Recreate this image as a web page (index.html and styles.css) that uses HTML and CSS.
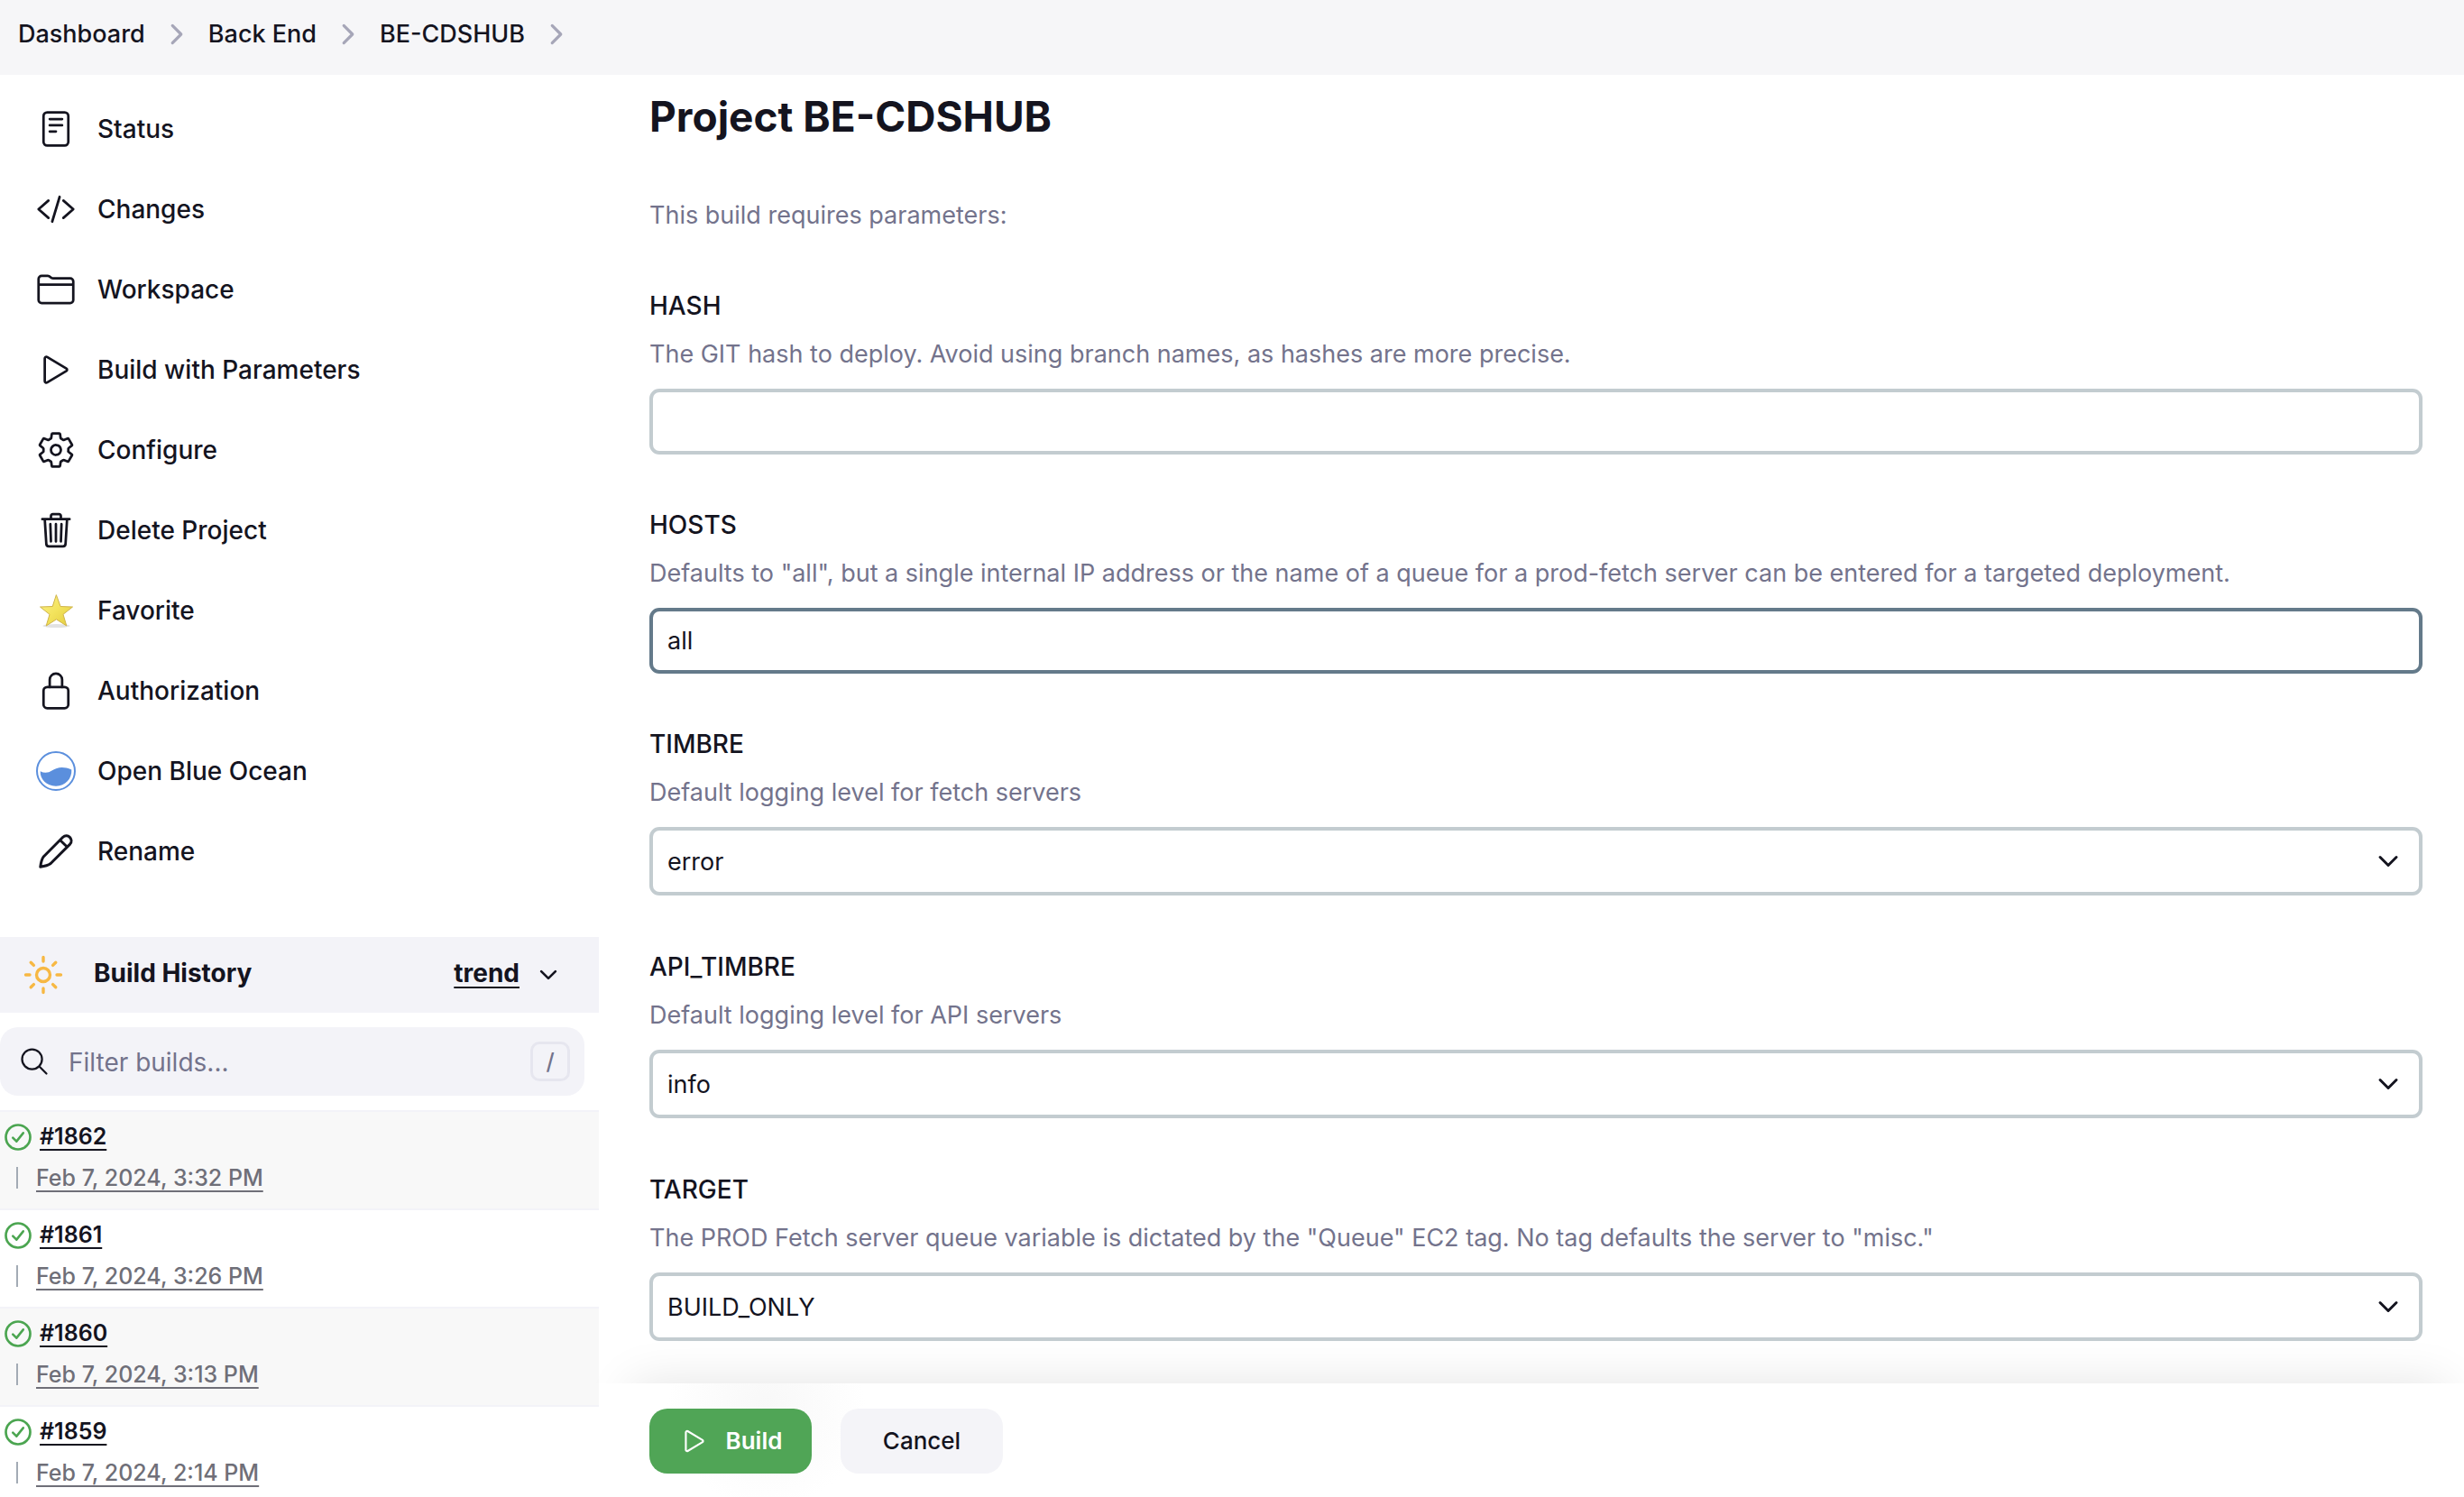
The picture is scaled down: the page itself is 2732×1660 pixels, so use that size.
FILE: index.html
```html
<!DOCTYPE html>
<html lang="en">
<head>
<meta charset="utf-8">
<title>BE-CDSHUB [Jenkins]</title>
<link rel="stylesheet" href="styles.css">
</head>
<body>
<svg class="sprite" aria-hidden="true">
  <symbol id="i-chevron-right" viewBox="0 0 512 512"><path d="M184 112l144 144-144 144" stroke-width="48"/></symbol>
  <symbol id="i-chevron-down" viewBox="0 0 512 512"><path d="M112 184l144 144 144-144" stroke-width="48"/></symbol>
  <symbol id="i-play" viewBox="0 0 512 512"><path d="M112 111v290c0 17.44 17 28.52 31 20.16l247.9-148.37c12.12-7.25 12.12-26.33 0-33.58L143 90.84c-14-8.36-31 2.72-31 20.16z" stroke-width="32"/></symbol>
  <symbol id="i-ok" viewBox="0 0 512 512"><path d="M448 256c0-106-86-192-192-192S64 150 64 256s86 192 192 192 192-86 192-192z" stroke-width="38"/><path d="M338 190L232 322l-58-58" stroke-width="36"/></symbol>
</svg>

<header>
  <nav class="breadcrumbs" aria-label="Breadcrumb">
    <a href="#">Dashboard</a>
    <svg class="icon crumb-sep"><use href="#i-chevron-right"/></svg>
    <a href="#">Back End</a>
    <svg class="icon crumb-sep"><use href="#i-chevron-right"/></svg>
    <a href="#">BE-CDSHUB</a>
    <svg class="icon crumb-sep"><use href="#i-chevron-right"/></svg>
  </nav>
</header>

<div class="page">
  <aside class="side">
    <nav class="tasks" aria-label="Project">
      <a class="task" href="#"><svg class="icon" viewBox="0 0 512 512"><rect x="96" y="42" width="320" height="428" rx="48" stroke-width="32"/><path d="M176 128h160M176 208h160M176 288h80" stroke-width="32"/></svg>Status</a>
      <a class="task" href="#"><svg class="icon" viewBox="0 0 512 512"><path d="M160 368L32 256l128-112M352 368l128-112-128-112M304 96l-96 320" stroke-width="32"/></svg>Changes</a>
      <a class="task" href="#"><svg class="icon" viewBox="0 0 512 512"><path d="M440 432H72a40 40 0 01-40-40V120a40 40 0 0140-40h75.89a40 40 0 0122.19 6.72l27.84 18.56a40 40 0 0022.19 6.72H440a40 40 0 0140 40v240a40 40 0 01-40 40zM32 192h448" stroke-width="32"/></svg>Workspace</a>
      <a class="task" href="#"><svg class="icon"><use href="#i-play"/></svg>Build with Parameters</a>
      <a class="task" href="#"><svg class="icon" viewBox="0 0 512 512"><path d="M262.29 192.31a64 64 0 1057.4 57.4 64.13 64.13 0 00-57.4-57.4zM416.39 256a154.34 154.34 0 01-1.53 20.79l45.21 35.46a10.81 10.81 0 012.45 13.75l-42.77 74a10.81 10.81 0 01-13.14 4.59l-44.9-18.08a16.11 16.11 0 00-15.17 1.75A164.48 164.48 0 01325 400.8a15.94 15.94 0 00-8.82 12.14l-6.73 47.89a11.08 11.08 0 01-10.68 9.17h-85.54a11.11 11.11 0 01-10.69-8.87l-6.72-47.82a16.07 16.07 0 00-9-12.22 155.3 155.3 0 01-21.46-12.57 16 16 0 00-15.11-1.71l-44.89 18.07a10.81 10.81 0 01-13.14-4.58l-42.77-74a10.8 10.8 0 012.45-13.75l38.21-30a16.05 16.05 0 006-14.08c-.36-4.17-.58-8.33-.58-12.5s.21-8.27.58-12.35a16 16 0 00-6.07-13.94l-38.19-30A10.81 10.81 0 0149.48 186l42.77-74a10.81 10.81 0 0113.14-4.59l44.9 18.08a16.11 16.11 0 0015.17-1.75A164.48 164.48 0 01187 111.2a15.94 15.94 0 008.82-12.14l6.73-47.89A11.08 11.08 0 01213.23 42h85.54a11.11 11.11 0 0110.69 8.87l6.72 47.82a16.07 16.07 0 009 12.22 155.3 155.3 0 0121.46 12.57 16 16 0 0015.11 1.71l44.89-18.07a10.81 10.81 0 0113.14 4.58l42.77 74a10.8 10.8 0 01-2.45 13.75l-38.21 30a16.05 16.05 0 00-6.05 14.08c.33 4.14.55 8.3.55 12.47z" stroke-width="32"/></svg>Configure</a>
      <a class="task" href="#"><svg class="icon" viewBox="0 0 512 512"><path d="M112 112l20 320c.95 18.49 14.4 32 32 32h184c17.67 0 30.87-13.51 32-32l20-320M80 112h352M192 112V72a23.93 23.93 0 0124-24h80a23.93 23.93 0 0124 24v40M256 176v224M184 176l8 224M328 176l-8 224" stroke-width="32"/></svg>Delete Project</a>
      <a class="task" href="#"><svg class="icon" viewBox="0 0 44 44"><defs><linearGradient id="gold" x1="0" y1="0" x2="1" y2="1"><stop offset="0" stop-color="#fbf08a"/><stop offset=".5" stop-color="#f3e35c"/><stop offset="1" stop-color="#e2cb3e"/></linearGradient></defs><ellipse cx="22.500" cy="39" rx="15" ry="2" fill="#e2e2e2" stroke="none"/><path d="M22.500 5l4.600 12.500 13.400.500-10.500 8.300 3.800 12.700-11.300-7.200L11.200 39 15 26.300 4.500 18l13.400-.500z" fill="url(#gold)" stroke="#d0b44a"/></svg>Favorite</a>
      <a class="task" href="#"><svg class="icon" viewBox="0 0 512 512"><path d="M336 208v-95a80 80 0 00-160 0v95" stroke-width="32"/><rect x="96" y="208" width="320" height="272" rx="48" stroke-width="32"/></svg>Authorization</a>
      <a class="task" href="#"><svg class="icon ocean" viewBox="0 0 44 44"><circle cx="22" cy="22" r="21" stroke-width="2"/><path class="wave" d="M4.700 22.300c4.500 2.300 8.800 2 13.300-1 5.500-3.500 12-4.800 21.300-.8.700 10-7 18.200-17.300 18.200S4.200 31 4.700 22.300z"/></svg>Open Blue Ocean</a>
      <a class="task" href="#"><svg class="icon" viewBox="0 0 44 44"><path d="M4.800 39.200c.500-4 1-8 3.700-11.500L29.800 6.300c5-5 12.500 2.500 7.800 7.800L16.200 35.500c-3.500 2.700-7.400 3.200-11.400 3.700zM27 10l7.300 7" stroke-width="3"/></svg>Rename</a>
    </nav>

    <section class="history">
      <div class="history-head">
        <svg class="icon sun" viewBox="0 0 512 512"><path d="M256 48v48M256 416v48M403.080 108.920l-33.940 33.940M142.860 369.140l-33.940 33.940M464 256h-48M96 256H48M403.080 403.080l-33.940-33.940M142.860 142.860l-33.940-33.940M336 256a80 80 0 01-160 0 80 80 0 01160 0z" stroke-width="36"/></svg>
        <h2>Build History</h2>
        <a class="trend" href="#">trend</a>
        <svg class="icon toggle"><use href="#i-chevron-down"/></svg>
      </div>
      <label class="filter">
        <svg class="icon search" viewBox="0 0 512 512"><path d="M221.090 64a157.090 157.090 0 10157.090 157.090A157.100 157.100 0 00221.090 64zM338.290 338.290L448 448" stroke-width="32"/></svg>
        <input type="search" placeholder="Filter builds..." aria-label="Filter builds">
        <kbd>/</kbd>
      </label>
      <ul class="builds">
        <li><div class="build-name"><svg class="icon ok"><use href="#i-ok"/></svg><a href="#">#1862</a></div><div class="build-date"><a href="#">Feb 7, 2024, 3:32 PM</a></div></li>
        <li><div class="build-name"><svg class="icon ok"><use href="#i-ok"/></svg><a href="#">#1861</a></div><div class="build-date"><a href="#">Feb 7, 2024, 3:26 PM</a></div></li>
        <li><div class="build-name"><svg class="icon ok"><use href="#i-ok"/></svg><a href="#">#1860</a></div><div class="build-date"><a href="#">Feb 7, 2024, 3:13 PM</a></div></li>
        <li><div class="build-name"><svg class="icon ok"><use href="#i-ok"/></svg><a href="#">#1859</a></div><div class="build-date"><a href="#">Feb 7, 2024, 2:14 PM</a></div></li>
      </ul>
    </section>
  </aside>

  <main>
    <h1>Project BE-CDSHUB</h1>
    <p class="intro">This build requires parameters:</p>
    <form>
      <div class="field">
        <label for="hash">HASH</label>
        <p>The GIT hash to deploy. Avoid using branch names, as hashes are more precise.</p>
        <input id="hash" type="text">
      </div>
      <div class="field">
        <label for="hosts">HOSTS</label>
        <p>Defaults to "all", but a single internal IP address or the name of a queue for a prod-fetch server can be entered for a targeted deployment.</p>
        <input id="hosts" class="hovered" type="text" value="all">
      </div>
      <div class="field">
        <label for="timbre">TIMBRE</label>
        <p>Default logging level for fetch servers</p>
        <div class="select"><select id="timbre"><option>error</option></select><svg class="icon"><use href="#i-chevron-down"/></svg></div>
      </div>
      <div class="field">
        <label for="api-timbre">API_TIMBRE</label>
        <p>Default logging level for API servers</p>
        <div class="select"><select id="api-timbre"><option>info</option></select><svg class="icon"><use href="#i-chevron-down"/></svg></div>
      </div>
      <div class="field">
        <label for="target">TARGET</label>
        <p>The PROD Fetch server queue variable is dictated by the "Queue" EC2 tag. No tag defaults the server to "misc."</p>
        <div class="select"><select id="target"><option>BUILD_ONLY</option></select><svg class="icon"><use href="#i-chevron-down"/></svg></div>
      </div>
      <div class="actions">
        <button class="primary" type="submit"><svg class="icon"><use href="#i-play"/></svg>Build</button>
        <button type="button">Cancel</button>
      </div>
    </form>
  </main>
</div>
</body>
</html>
```
FILE: styles.css
```css
:root {
  --text: #14141f;
  --muted: #73738c;
  --panel: #f3f3f8;
  --border: #c3ccd0;
  --green: #50a556;
}

* { box-sizing: border-box; }

body {
  margin: 0;
  min-height: 100vh;
  display: flex;
  flex-direction: column;
  background: #fff;
  color: var(--text);
  font: 400 27px/36px Inter, "Liberation Sans", sans-serif;
}

a { color: inherit; text-decoration: none; }
h1, h2, p, ul { margin: 0; padding: 0; }
input, select, button { font: inherit; color: inherit; }

.sprite { display: none; }

.icon {
  flex: none;
  width: 44px;
  height: 44px;
  fill: none;
  stroke: currentColor;
  stroke-linecap: round;
  stroke-linejoin: round;
}

.breadcrumbs {
  display: flex;
  align-items: center;
  gap: 18px;
  height: 83px;
  padding: 0 20px 8px;
  background: #f6f6f8;
  font-weight: 500;
}
.icon.crumb-sep { width: 34px; height: 34px; color: #a6a6b8; }

.page {
  flex: 1;
  display: grid;
  grid-template-columns: 664px minmax(0, 1fr);
  column-gap: 56px;
}

.tasks { padding: 15px 0 51px; }
.task {
  display: flex;
  align-items: center;
  gap: 24px;
  height: 89px;
  padding-left: 40px;
  font-size: 28px;
  font-weight: 500;
}
.icon.ocean { color: #5b8fdd; }
.wave { fill: currentColor; stroke: none; }

.history-head {
  display: flex;
  align-items: center;
  height: 84px;
  padding: 0 42px 0 24px;
  background: var(--panel);
  font-size: 28px;
  font-weight: 700;
}
.history-head h2 {
  flex: 1;
  margin-left: 32px;
  padding-bottom: 5px;
  font-size: inherit;
}
.icon.sun { width: 48px; height: 48px; color: #f7b843; }
.icon.toggle { width: 28px; height: 28px; }
.trend {
  margin-right: 18px;
  padding-bottom: 5px;
  text-decoration: underline 2px;
  text-underline-offset: 5px;
}

.filter {
  display: flex;
  align-items: center;
  gap: 20px;
  height: 76px;
  margin: 16px 16px 16px 0;
  padding: 0 16px 0 20px;
  border-radius: 20px;
  background: var(--panel);
  font-size: 28px;
}
.icon.search { width: 36px; height: 36px; }
.filter input {
  flex: 1;
  min-width: 0;
  padding: 2px 0 0;
  border: 0;
  background: none;
  outline: none;
}
.filter input::placeholder { color: var(--muted); opacity: 1; }
kbd {
  width: 44px;
  height: 44px;
  border: 3px solid #e6e6ef;
  border-radius: 10px;
  color: var(--muted);
  font: 500 25px/38px Inter, sans-serif;
  text-align: center;
}

.builds { list-style: none; }
.builds li {
  height: 109px;
  padding: 10px 0 0 2px;
  border-top: 2px solid var(--panel);
  font-size: 25px;
  font-weight: 500;
}
.builds li:last-child { height: 100px; }
.builds li:nth-child(odd) { background: #f8f8f8; }
.builds a {
  text-decoration: underline 2px;
  text-underline-offset: 5px;
  text-decoration-skip-ink: none;
}
.build-name { display: flex; gap: 6px; font-weight: 600; line-height: 34px; }
.icon.ok { width: 36px; height: 36px; color: #4ba550; }
.build-date {
  display: flex;
  align-items: center;
  gap: 20px;
  margin-left: 16px;
  padding-top: 9px;
  color: #6f6f78;
}
.build-date::before { content: ""; width: 2px; height: 24px; background: #a3abb5; }

main { display: flex; flex-direction: column; }
h1 { padding: 18px 0 22px; font-size: 46px; font-weight: 700; line-height: 56px; }
.intro { margin: 42px 0 64px; color: var(--muted); }

form { flex: 1; display: flex; flex-direction: column; }
.field { margin: 0 46px 60px 0; }
.field:has(.select) { margin-bottom: 61px; }
.field label { display: block; font-size: 28px; font-weight: 500; }
.field p { margin: 18px 0 20px; color: var(--muted); }
.field input, .field select {
  display: block;
  width: 100%;
  height: 73px;
  padding: 0 16px;
  border: 4px solid var(--border);
  border-radius: 11px;
  background: #fff;
  outline: none;
}
.field input.hovered { border-color: #647a8a; }
.field select { height: 76px; padding-top: 2px; appearance: none; }
.select { display: grid; align-items: center; }
.select > * { grid-area: 1 / 1; }
.select .icon { width: 32px; height: 32px; justify-self: end; margin-right: 22px; pointer-events: none; }

.actions {
  position: sticky;
  bottom: 0;
  flex: 1;
  display: flex;
  gap: 32px;
  margin-top: -14px;
  padding: 28px 0 26px;
  background: radial-gradient(circle 110px at 130px 28px, #f8f8f8, #fff);
}
/* Shadow above the bar only; everything below its top edge is clipped */
.actions::before {
  content: "";
  position: absolute;
  inset: 0 20px 0 -20px;
  box-shadow: 0 0 54px rgba(0, 0, 0, 0.11);
  clip-path: inset(-60px -60px 100% -60px);
  pointer-events: none;
}
button {
  display: flex;
  align-items: center;
  justify-content: center;
  gap: 18px;
  width: 180px;
  height: 72px;
  padding: 0;
  border: 0;
  border-radius: 20px;
  background: #f4f4f8;
  font-size: 26px;
  font-weight: 500;
}
button .icon { width: 34px; height: 34px; }
.primary { background: var(--green); color: #fff; font-weight: 600; }
```
